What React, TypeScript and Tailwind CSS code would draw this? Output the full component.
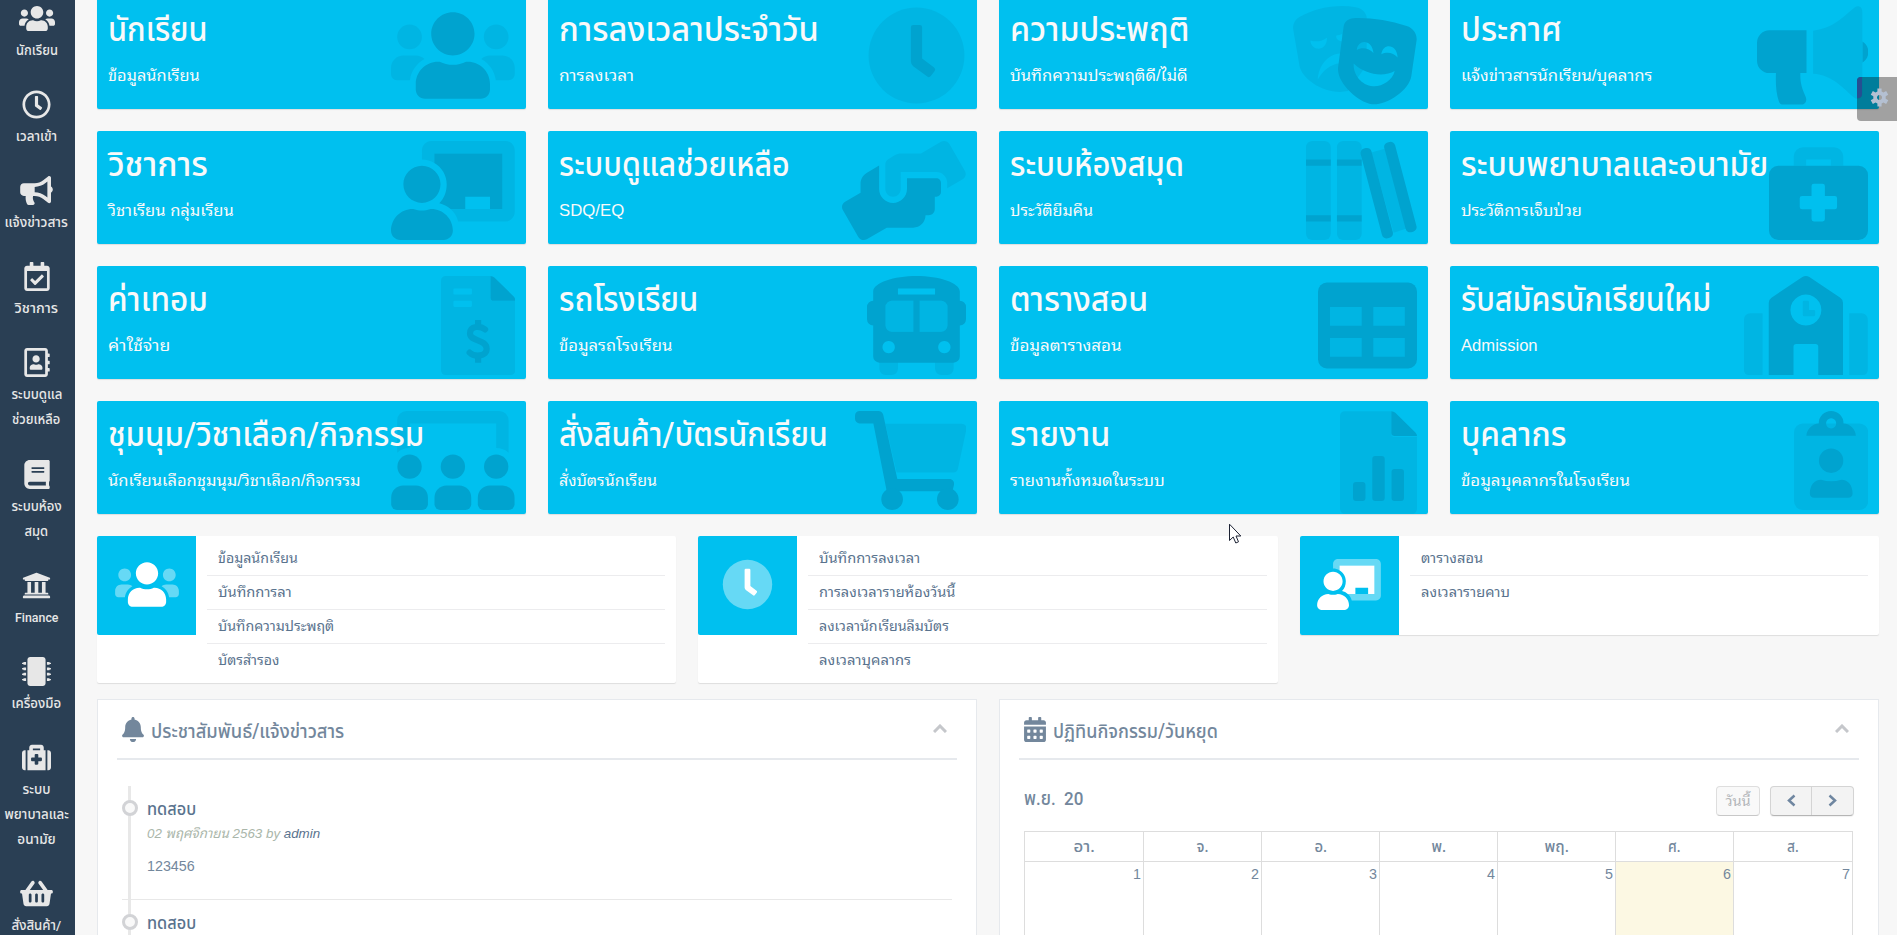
import { useLayoutEffect, useRef, useState } from "react";
import type { ReactNode } from "react";
import {
  FaBell, FaBook, FaBullhorn, FaCalendarAlt, FaMedkit, FaMicrochip, FaRegAddressBook,
  FaRegCalendarCheck, FaRegClock, FaShoppingBasket, FaUniversity, FaUsers,
} from "react-icons/fa";
import type { IconType } from "react-icons";

/** A single line of text, condensed or widened horizontally to a given width. */
function Fit({ w, center, children }: { w: number; center?: boolean; children: ReactNode }) {
  const ref = useRef<HTMLSpanElement>(null);
  const [scale, setScale] = useState(1);
  useLayoutEffect(() => {
    const natural = ref.current ? ref.current.offsetWidth : 0;
    if (natural > 0) setScale(w / natural);
  }, [w]);
  return (
    <span
      ref={ref}
      className={"inline-block whitespace-nowrap " + (center ? "origin-center" : "origin-left")}
      style={{ transform: `scaleX(${scale})` }}
    >
      {children}
    </span>
  );
}

/* ---------- two-tone icons: L = secondary layer, D = primary layer ---------- */
type Tone = { L: string; D: string };
const cardTone: Tone = { L: "fill-[#00b5e3]", D: "fill-[#00a3cf]" };
const whiteTone: Tone = { L: "fill-[#66d9f5]", D: "fill-white" };

const UsersArt = ({ L, D }: Tone) => (
  <>
    <path className={L} d="M96 224c35.3 0 64-28.7 64-64s-28.7-64-64-64-64 28.7-64 64 28.7 64 64 64zm448 0c35.3 0 64-28.7 64-64s-28.7-64-64-64-64 28.7-64 64 28.7 64 64 64zm32 32h-64c-17.6 0-33.5 7.1-45.1 18.6 40.3 22.1 68.9 62 75.1 109.4h66c17.7 0 32-14.3 32-32v-32c0-35.3-28.7-64-64-64zM173.100 274.600C161.500 263.100 145.600 256 128 256H64c-35.300 0-64 28.700-64 64v32c0 17.700 14.300 32 32 32h65.900c6.300-47.400 34.900-87.300 75.200-109.400z" />
    <path className={D} d="M320 256c61.900 0 112-50.100 112-112S381.900 32 320 32 208 82.100 208 144s50.100 112 112 112zm76.800 32h-8.300c-20.800 10-43.900 16-68.500 16s-47.600-6-68.500-16h-8.300C179.600 288 128 339.600 128 403.200V432c0 26.500 21.500 48 48 48h288c26.500 0 48-21.500 48-48v-28.800c0-63.600-51.600-115.200-115.200-115.200z" />
  </>
);
const ClockArt = ({ L, D }: Tone) => (
  <>
    <circle className={L} cx="256" cy="256" r="248" />
    <path className={D} d="M227 110q0-12 12-12h34q12 0 12 12v162l62 46q10 8 3 18l-20 26q-8 10-18 3l-73-54q-12-9-12-24z" />
  </>
);
const TeacherArt = ({ L, D }: Tone) => (
  <>
    <path className={L} d="M592 0H208c-26.470 0-48 22.250-48 49.590V96c23.420 0 45.100 6.780 64 17.800V64h352v288h-268.240c19.100 16.690 33.120 38.730 39.690 64H592c26.470 0 48-22.250 48-49.590V49.590C640 22.250 618.470 0 592 0z" />
    <path className={D} d="M208 352c-2.390 0-4.780.35-7.060 1.090C187.980 357.300 174.350 360 160 360c-14.350 0-27.980-2.700-40.950-6.910-2.280-.74-4.660-1.090-7.050-1.090C49.940 352-.33 402.480 0 464.620.14 490.880 21.730 512 48 512h224c26.270 0 47.860-21.120 48-47.380.33-62.140-49.940-112.620-112-112.620zm-48-32c53.020 0 96-42.980 96-96s-42.980-96-96-96-96 42.980-96 96 42.980 96 96 96zM224 64h352v288h-64v-64H384v64h-76c-17-15-37-25-58-30 25-24 38-60 38-98 0-47-26-88-64-110z" />
  </>
);
const MasksArt = ({ L, D }: Tone) => (
  <>
    <path className={L} fillRule="evenodd" d="M2 127C-4 98 9 70 33 57 101 19 177 0 253 0c24 0 48 2 72 6 30 5 52 26 56 51v250L284 440C170 464 45 380 33 306zM90 178c4 58 86 60 86-14-24 18-56 24-86 14zM224 152c-4 12 6 28 31 31v-40c-10 6-20 8-31 9zM128 380c5-70 50-130 115-134v50c-50 4-90 40-115 84z" />
    <path className={D} fillRule="evenodd" d="M262 105c4-25 26-41 50-42 93-3 185 11 276 40 34 10 55 43 51 75l-27 184C600 440 480 515 408 508 340 500 225 400 233 318zM330 227c25-15 65-9 86 16-6-73-81-73-86-16zM457 249c28-14 63-9 84 17-3-71-76-76-84-17zM314 298c-4 52 36 112 100 117 46 3 101-30 112-79-56 34-156 19-212-38z" />
  </>
);
const HornArt = ({ L, D }: Tone) => (
  <>
    <path className={D} d="M64 126H256V347H224C224 380 224 410 250 465C262 490 250 510 230 510H136C124 510 118 504 114 496C98 450 96 400 98 347H64A64 64 0 0 1 0 283V190A64 64 0 0 1 64 126zM545 183C566 195 576 217 576 238S566 281 545 293z" />
    <path className={L} d="M290 128C400 112 440 60 500 12 522-8 545 2 545 32V448C545 478 522 490 500 472 450 430 390 355 290 350z" />
  </>
);
const HandsArt = ({ L, D }: Tone) => (
  <>
    <path className={D} d="M488 192H336v56c0 39.700-32.300 72-72 72s-72-32.300-72-72V126.400l-64.900 39C107.800 176.900 96 197.800 96 220.200v47.300l-80 46.200C.7 322.500-4.600 342.100 4.300 357.400l80 138.600c8.800 15.300 28.400 20.500 43.700 11.700L231.400 448H368c35.300 0 64-28.700 64-64h16c17.700 0 32-14.300 32-32v-64h8c13.300 0 24-10.700 24-24v-48c0-13.300-10.700-24-24-24z" />
    <path className={L} d="M635.700 154.600L555.700 16C546.900.7 527.300-4.500 512 4.300L408.600 64H306.400c-12 0-23.700 3.400-33.900 9.700L239 94.600c-9.400 5.800-15 16.100-15 27.100V248c0 22.100 17.900 40 40 40s40-17.900 40-40v-88h184c30.900 0 56 25.100 56 56v28.500l80-46.200c15.300-8.900 20.500-28.400 11.700-43.700z" />
  </>
);
const BooksArt = ({ L, D }: Tone) => (
  <>
    <rect className={L} width="128" height="512" rx="32" />
    <rect className={L} x="160" width="128" height="512" rx="32" />
    <path className={D} d="M0 96h128v32H0zM160 96h128v32H160zM0 384h128v32H0zM160 384h128v32H160z" />
    <path className={L} d="M338 60L407 40 520 453 453 474z" />
    <rect className={D} x="337" y="30" width="58" height="480" rx="24" transform="rotate(-14.800 366 270)" />
    <rect className={D} x="459" y="-2" width="58" height="480" rx="24" transform="rotate(-14.800 488 238)" />
  </>
);
const MedArt = ({ L, D }: Tone) => (
  <>
    <path className={L} d="M128 128V80a48 48 0 0 1 48-48H336a48 48 0 0 1 48 48V128H320V96H192V128z" />
    <path className={D} fillRule="evenodd" d="M48 128H464a48 48 0 0 1 48 48V464a48 48 0 0 1-48 48H48a48 48 0 0 1-48-48V176a48 48 0 0 1 48-48zM232 221a12 12 0 0 0-12 12V284H171a12 12 0 0 0-12 12V341a12 12 0 0 0 12 12H220V404a12 12 0 0 0 12 12H277a12 12 0 0 0 12-12V353H340a12 12 0 0 0 12-12V296a12 12 0 0 0-12-12H289V233a12 12 0 0 0-12-12z" />
  </>
);
const InvoiceArt = ({ L, D }: Tone) => (
  <>
    <path className={L} fillRule="evenodd" d="M24 0H256V112a16 16 0 0 0 16 16H384V488a24 24 0 0 1-24 24H24a24 24 0 0 1-24-24V24A24 24 0 0 1 24 0zM70 64a6 6 0 0 0-6 6V90a6 6 0 0 0 6 6H154a6 6 0 0 0 6-6V70a6 6 0 0 0-6-6zM70 128a6 6 0 0 0-6 6V154a6 6 0 0 0 6 6H154a6 6 0 0 0 6-6V134a6 6 0 0 0-6-6z" />
    <path className={D} d="M256 0q12 0 20 8L376 106q8 8 8 22H272a16 16 0 0 1-16-16zM176 228h32v34h-32zM176 414h32v34h-32z" />
    <path className="fill-none stroke-[#00a3cf] stroke-[32]" strokeLinecap="round" d="M228 276C205 258 150 254 150 298 150 340 236 326 236 376 236 418 172 420 148 396" />
  </>
);
const BusArt = ({ L, D }: Tone) => (
  <>
    <path className={L} d="M64 440H160V480a32 32 0 0 1-32 32H96a32 32 0 0 1-32-32zM352 440H448V480a32 32 0 0 1-32 32H384a32 32 0 0 1-32-32zM96 128H416V288H96z" />
    <path className={D} fillRule="evenodd" d="M32 80C32 35 140 0 256 0S480 35 480 80V128A32 32 0 0 1 512 160V224A32 32 0 0 1 480 256V416A32 32 0 0 1 448 448H64A32 32 0 0 1 32 416V256A32 32 0 0 1 0 224V160A32 32 0 0 1 32 128zM160 64V96H352V64zM128 128A32 32 0 0 0 96 160V256A32 32 0 0 0 128 288H240V128zM272 128V288H384A32 32 0 0 0 416 256V160A32 32 0 0 0 384 128zM112 336a32 32 0 1 0 .1 0zM400 336a32 32 0 1 0 .1 0z" />
  </>
);
const TableArt = ({ L, D }: Tone) => (
  <>
    <rect className={D} y="34" width="512" height="444" rx="46" />
    <path className={L} d="M62 160H226V257H62zM286 160H449V257H286zM62 320H226V418H62zM286 320H449V418H286z" />
  </>
);
const SchoolArt = ({ L, D }: Tone) => (
  <>
    <path className={L} d="M96 192V512H24A24 24 0 0 1 0 488V224A32 32 0 0 1 32 192zM544 192H608A32 32 0 0 1 640 224V488A24 24 0 0 1 616 512H544zM310 128H330a6 6 0 0 1 6 6V176H362a6 6 0 0 1 6 6V202a6 6 0 0 1-6 6H310a6 6 0 0 1-6-6V134a6 6 0 0 1 6-6z" />
    <path className={D} fillRule="evenodd" d="M302 5Q320-5 338 5L498 112Q512 122 512 138V512H384V366a14 14 0 0 0-14-14H270a14 14 0 0 0-14 14V512H128V138Q128 122 142 112zM320 96a80 80 0 1 0 .1 0z" />
  </>
);
const ClassArt = ({ L, D }: Tone) => (
  <>
    <path className={L} d="M80 0H560a48 48 0 0 1 48 48V216A96 96 0 0 0 544 192V64H96V192A96 96 0 0 0 32 216V48A48 48 0 0 1 80 0z" />
    {[96, 320, 544].map((cx) => (
      <g key={cx} className={D}>
        <circle cx={cx} cy="288" r="63" />
        <path transform={`translate(${cx - 95} 385)`} d="M62 0H128A62 62 0 0 1 190 62V97A30 30 0 0 1 160 127H30A30 30 0 0 1 0 97V62A62 62 0 0 1 62 0z" />
      </g>
    ))}
  </>
);
const CartArt = ({ L, D }: Tone) => (
  <>
    <path className={L} d="M157 66H552Q580 68 576 96L532 300Q528 318 508 318H215z" />
    <path className={D} d="M24 0H121c12 0 22 8 25 20L219 352H488c16 0 27 14 24 29l-8 34H164L95 64H24A24 24 0 0 1 0 40V24A24 24 0 0 1 24 0z" />
    <circle className={D} cx="192" cy="456" r="56" />
    <circle className={D} cx="480" cy="456" r="56" />
  </>
);
const ReportArt = ({ L, D }: Tone) => (
  <>
    <path className={L} d="M24 0H256V112a16 16 0 0 0 16 16H384V488a24 24 0 0 1-24 24H24a24 24 0 0 1-24-24V24A24 24 0 0 1 24 0z" />
    <path className={D} d="M256 0q12 0 20 8L376 106q8 8 8 18H272a16 16 0 0 1-16-16z" />
    <rect className={D} x="65" y="353" width="62" height="95" rx="15" />
    <rect className={D} x="161" y="224" width="62" height="224" rx="15" />
    <rect className={D} x="257" y="288" width="62" height="160" rx="15" />
  </>
);
const StaffArt = ({ L, D }: Tone) => (
  <>
    <rect className={L} y="64" width="384" height="448" rx="46" />
    <path className={D} fillRule="evenodd" d="M64 128C66 92 96 66 128 64A64 64 0 0 1 256 64C290 66 318 92 320 128zM192 38a26 26 0 1 0 .1 0z" />
    <circle className={D} cx="192" cy="257" r="63" />
    <path className={D} d="M140 355Q192 372 245 355C280 355 303 385 303 425Q303 448 280 448H105Q82 448 82 425C82 385 105 355 140 355z" />
  </>
);

type Card = { t: string; tw: number; s: string; sw: number; vw: number; box: string; Art: (t: Tone) => ReactNode };
const W640 = "h-[99px] w-[123.750px]";
const W576 = "h-[99px] w-[111.375px]";
const W512 = "h-[99px] w-[99px]";
const W384 = "h-[99px] w-[74.250px]";
const cards: Card[] = [
  { t: "นักเรียน", tw: 100, s: "ข้อมูลนักเรียน", sw: 92, vw: 640, box: W640, Art: UsersArt },
  { t: "การลงเวลาประจำวัน", tw: 260, s: "การลงเวลา", sw: 75, vw: 512, box: W512, Art: ClockArt },
  { t: "ความประพฤติ", tw: 179, s: "บันทึกความประพฤติดี/ไม่ดี", sw: 178, vw: 640, box: W640, Art: MasksArt },
  { t: "ประกาศ", tw: 101, s: "แจ้งข่าวสารนักเรียน/บุคลากร", sw: 191, vw: 576, box: W576, Art: HornArt },
  { t: "วิชาการ", tw: 100, s: "วิชาเรียน กลุ่มเรียน", sw: 126, vw: 640, box: W640, Art: TeacherArt },
  { t: "ระบบดูแลช่วยเหลือ", tw: 231, s: "SDQ/EQ", sw: 65, vw: 640, box: W640, Art: HandsArt },
  { t: "ระบบห้องสมุด", tw: 174, s: "ประวัติยืมคืน", sw: 83, vw: 576, box: W576, Art: BooksArt },
  { t: "ระบบพยาบาลและอนามัย", tw: 307, s: "ประวัติการเจ็บป่วย", sw: 121, vw: 512, box: W512, Art: MedArt },
  { t: "ค่าเทอม", tw: 100, s: "ค่าใช้จ่าย", sw: 62, vw: 384, box: W384, Art: InvoiceArt },
  { t: "รถโรงเรียน", tw: 139, s: "ข้อมูลรถโรงเรียน", sw: 113, vw: 512, box: W512, Art: BusArt },
  { t: "ตารางสอน", tw: 138, s: "ข้อมูลตารางสอน", sw: 112, vw: 512, box: W512, Art: TableArt },
  { t: "รับสมัครนักเรียนใหม่", tw: 250, s: "Admission", sw: 76.5, vw: 640, box: W640, Art: SchoolArt },
  { t: "ชุมนุม/วิชาเลือก/กิจกรรม", tw: 316, s: "นักเรียนเลือกชุมนุม/วิชาเลือก/กิจกรรม", sw: 252, vw: 640, box: W640, Art: ClassArt },
  { t: "สั่งสินค้า/บัตรนักเรียน", tw: 269, s: "สั่งบัตรนักเรียน", sw: 98, vw: 576, box: W576, Art: CartArt },
  { t: "รายงาน", tw: 100, s: "รายงานทั้งหมดในระบบ", sw: 155, vw: 384, box: "h-[103px] w-[77px]", Art: ReportArt },
  { t: "บุคลากร", tw: 105, s: "ข้อมูลบุคลากรในโรงเรียน", sw: 169, vw: 384, box: W384, Art: StaffArt },
];

const body = "font-['Liberation_Sans',Tahoma,'Noto_Sans_Thai_Looped',Loma,Waree,'Noto_Sans_Thai','Noto_Sans',sans-serif]";
const display = "font-[Roboto,'Noto_Sans_Thai','Noto_Sans',sans-serif] font-medium";

function StatCard({ c }: { c: Card }) {
  return (
    <a className="relative block h-[113px] overflow-hidden rounded-[2px] bg-[#00c0ef] pl-[11px] text-[#f9f9f9] shadow-[0_1px_1px_rgba(0,0,0,0.1)]">
      <svg className={"absolute top-[10px] right-[11px] " + c.box} viewBox={`0 0 ${c.vw} 512`}>
        <c.Art {...cardTone} />
      </svg>
      <h3 className={"relative h-[66px] pt-[6px] text-[34px] leading-[54px] " + display}><Fit w={c.tw}>{c.t}</Fit></h3>
      <p className="relative text-[16.500px] leading-[26px]"><Fit w={c.sw}>{c.s}</Fit></p>
    </a>
  );
}

const menu: { Icon: IconType; size: string; lines: [string, number][]; h: string }[] = [
  { Icon: FaUsers, size: "h-[29px] w-[36px]", lines: [["นักเรียน", 42]], h: "h-[86px]" },
  { Icon: FaRegClock, size: "h-[29px] w-[29px]", lines: [["เวลาเข้า", 41]], h: "h-[86px]" },
  { Icon: FaBullhorn, size: "h-[29px] w-[33px]", lines: [["แจ้งข่าวสาร", 63]], h: "h-[86px]" },
  { Icon: FaRegCalendarCheck, size: "h-[29px] w-[26px]", lines: [["วิชาการ", 43]], h: "h-[86px]" },
  { Icon: FaRegAddressBook, size: "h-[29px] w-[26px]", lines: [["ระบบดูแล", 51], ["ช่วยเหลือ", 48]], h: "h-[112px]" },
  { Icon: FaBook, size: "h-[29px] w-[26px]", lines: [["ระบบห้อง", 50], ["สมุด", 24]], h: "h-[111px]" },
  { Icon: FaUniversity, size: "h-[29px] w-[29px]", lines: [["Finance", 43]], h: "h-[86px]" },
  { Icon: FaMicrochip, size: "h-[29px] w-[29px]", lines: [["เครื่องมือ", 50]], h: "h-[86px]" },
  { Icon: FaMedkit, size: "h-[29px] w-[29px]", lines: [["ระบบ", 28], ["พยาบาลและ", 64], ["อนามัย", 38]], h: "h-[136px]" },
  { Icon: FaShoppingBasket, size: "h-[29px] w-[33px]", lines: [["สั่งสินค้า/", 50]], h: "h-[86px]" },
];

function Sidebar() {
  return (
    <nav className={"h-[935px] w-[75px] shrink-0 overflow-hidden bg-[#2a3f54] pt-[4px] text-[#e7e7e7] " + display}>
      {menu.map(({ Icon, size, lines, h }, i) => (
        <div key={i} className={"flex flex-col items-center pr-[2px] " + h}>
          <Icon className={"mb-[5px] shrink-0 " + size} />
          {lines.map(([t, w]) => (
            <div key={t} className="flex h-[25px] shrink-0 justify-center text-[13.500px] leading-[25px]"><Fit w={w} center>{t}</Fit></div>
          ))}
        </div>
      ))}
    </nav>
  );
}

const quick: { vw: number; box: string; Art: (t: Tone) => ReactNode; rows: [string, number][] }[] = [
  { vw: 640, box: "h-[51px] w-[64px]", Art: UsersArt, rows: [["ข้อมูลนักเรียน", 80], ["บันทึกการลา", 74], ["บันทึกความประพฤติ", 116], ["บัตรสำรอง", 61]] },
  { vw: 512, box: "h-[51px] w-[51px]", Art: ClockArt, rows: [["บันทึกการลงเวลา", 101], ["การลงเวลารายห้องวันนี้", 136], ["ลงเวลานักเรียนลืมบัตร", 130], ["ลงเวลาบุคลากร", 92]] },
  { vw: 640, box: "h-[51px] w-[64px]", Art: TeacherArt, rows: [["ตารางสอน", 62], ["ลงเวลารายคาบ", 89]] },
];

function QuickBox({ q }: { q: (typeof quick)[number] }) {
  return (
    <section className="flex min-h-[99px] items-start self-start rounded-[2px] bg-white shadow-[0_1px_1px_rgba(0,0,0,0.1)]">
      <div className="flex h-[99px] w-[99px] shrink-0 items-center justify-center rounded-l-[2px] bg-[#00c0ef] pb-[2px]">
        <svg className={q.box} viewBox={`0 0 ${q.vw} 512`}><q.Art {...whiteTone} /></svg>
      </div>
      <ul className="ml-[11px] mr-[11px] flex-1 pt-[6px] pb-[5px] text-[13.500px] text-[#5a738e]">
        {q.rows.map(([t, w], i) => (
          <li key={t} className={"h-[34px] pl-[11px] leading-[33px] " + (i < q.rows.length - 1 ? "border-b border-[#ececee]" : "")}>
            <Fit w={w}>{t}</Fit>
          </li>
        ))}
      </ul>
    </section>
  );
}

function Panel({ icon, title, w, children }: { icon: ReactNode; title: string; w: number; children: ReactNode }) {
  return (
    <section className="h-[300px] border border-[#e6e9ed] bg-white px-[19px] text-[#73879c]">
      <header className="flex h-[60px] items-start border-b-2 border-[#e6e9ed] pl-[5px]">
        <span className="mt-[17px]">{icon}</span>
        <h2 className={"ml-[7px] mt-[13px] flex-1 text-[19.500px] leading-[38px] " + display}><Fit w={w}>{title}</Fit></h2>
        <svg className="mt-[24px] mr-[10px] h-[9px] w-[14px] fill-none stroke-[#c5c7cb] stroke-[3]" viewBox="0 0 14 9"><path d="M1 8l6-6 6 6" /></svg>
      </header>
      {children}
    </section>
  );
}

function Entry({ children }: { children?: ReactNode }) {
  return (
    <li className="flex h-[114px] border-b border-[#e8e8e8]">
      <div className="relative w-[25px] shrink-0">
        <span className="absolute top-[14px] left-0 h-[16px] w-[16px] rounded-full border-[3px] border-[#d2d3d6] bg-[#f9f9f9]" />
      </div>
      <div>
        <h4 className={"h-[35px] pt-[10px] text-[17px] leading-[26px] text-[#5a738e] " + display}><Fit w={49}>ทดสอบ</Fit></h4>
        {children}
      </div>
    </li>
  );
}

const days: [string, number][] = [["อา.", 21], ["จ.", 12], ["อ.", 13], ["พ.", 15], ["พฤ.", 24], ["ศ.", 13], ["ส.", 12]];

function Calendar() {
  return (
    <div className="pr-[6px] pl-[5px] pt-[25px]">
      <div className="flex h-[46px] items-start">
        <h3 className={"flex-1 pt-[1px] text-[19px] leading-[26px] " + display}><Fit w={59}>พ.ย.&nbsp; 20</Fit></h3>
        <button className="mt-[1px] flex h-[30px] w-[44px] items-center justify-center rounded-[4px] border border-[#dedede] border-b-[#c8c8c8] bg-[#f9f9f9] text-[14px] leading-[26px] text-[#b3b6ba]"><Fit w={25} center>วันนี้</Fit></button>
        <div className="mt-[1px] -mr-[1px] ml-[10px] flex h-[30px] w-[84px] rounded-[4px] border border-[#d4d4d4] border-b-[#b5b5b5] bg-[#f3f3f3] shadow-[0_1px_1px_rgba(0,0,0,0.06)]">
          <button className="flex w-[41px] items-center justify-center border-r border-[#d4d4d4] pb-[1px]">
            <svg className="h-[13px] w-[9px] fill-none stroke-[#6f86a0] stroke-[2.500]" viewBox="0 0 9 12"><path d="M7.500 1L2 6l5.500 5" /></svg>
          </button>
          <button className="flex flex-1 items-center justify-center pb-[1px]">
            <svg className="h-[13px] w-[9px] fill-none stroke-[#6f86a0] stroke-[2.500]" viewBox="0 0 9 12"><path d="M1.500 1L7 6l-5.500 5" /></svg>
          </button>
        </div>
      </div>
      <div className="grid grid-cols-[119px_repeat(5,118px)_119px] border-t border-l border-[#dddddd]">
        {days.map(([d, w], i) => (
          <div key={d} className="border-r border-[#dddddd]">
            <div className={"flex h-[30px] justify-center border-b border-[#dddddd] text-[16px] leading-[30px] " + display}><Fit w={w} center>{d}</Fit></div>
            <div className={"h-[130px] pr-[2px] text-right text-[14.300px] leading-[25px] " + (i === 5 ? "bg-[#fcf8e3]" : "")}>{i + 1}</div>
          </div>
        ))}
      </div>
    </div>
  );
}

export default function App() {
  return (
    <div className={"relative flex h-[935px] w-[1897px] overflow-hidden bg-[#f7f7f7] " + body}>
      <Sidebar />
      <main className="h-[935px] flex-1 overflow-hidden pr-[18px] pl-[22px]">
        <div className="-mt-[4px] grid grid-cols-4 gap-[22px]">
          {cards.map((c) => <StatCard key={c.t} c={c} />)}
        </div>
        <div className="mt-[22px] grid h-[147px] grid-cols-3 gap-[22px]">
          {quick.map((q, i) => <QuickBox key={i} q={q} />)}
        </div>
        <div className="mt-[16px] grid grid-cols-2 gap-[22px]">
          <Panel icon={<FaBell className="h-[25px] w-[22px]" />} title="ประชาสัมพันธ์/แจ้งข่าวสาร" w={193}>
            <div className="relative mt-[26px] pl-[5px] pr-[5px]">
              <span className="absolute top-0 left-[11px] h-[220px] w-[3px] bg-[#e8e8e8]" />
              <ul className="relative">
                <Entry>
                  <p className="h-[25px] text-[13.500px] leading-[25px] text-[#aab6aa] italic"><Fit w={173}>02 พฤศจิกายน 2563 by <span className="text-[#5a738e]">admin</span></Fit></p>
                  <p className="mt-[7px] text-[14.300px] leading-[26px]"><Fit w={48}>123456</Fit></p>
                </Entry>
                <Entry />
              </ul>
            </div>
          </Panel>
          <Panel icon={<FaCalendarAlt className="h-[25px] w-[22px]" />} title="ปฏิทินกิจกรรม/วันหยุด" w={165}>
            <Calendar />
          </Panel>
        </div>
      </main>
      <button className="absolute top-[77px] right-0 flex h-[44px] w-[40px] items-center justify-center overflow-hidden rounded-l-[4px] bg-black/35">
        <span className="absolute top-0 left-0 h-[21px] w-[5px] rounded-br-[4px] bg-[#264f92]" />
        <svg className="ml-[5px] -mt-[3px] h-[19px] w-[19px] fill-[#b4c0d2]" viewBox="-10 -10 20 20">
          <path fillRule="evenodd" d="M-2.200-9.500h4.400v3.200l2 1.100L7-6.800l2.200 3.900L6.500-1.200v2.400l2.700 1.700L7 6.800 4.200 5.200l-2 1.100v3.200h-4.400V6.300l-2-1.100L-7 6.800l-2.200-3.900 2.700-1.700v-2.400l-2.700-1.700L-7-6.800l2.800 1.600 2-1.100zM0-2.700a2.700 2.700 0 1 0 .1 0z" />
        </svg>
      </button>
      <svg className="absolute top-[523px] left-[1229px] h-[21px] w-[13px]" viewBox="0 0 13 21">
        <path className="fill-white stroke-[#1c2233]" d="M.5 1.200v16.300l3.700-3.500 2.600 6 2.700-1.200L7 13h4.800z" />
      </svg>
    </div>
  );
}
